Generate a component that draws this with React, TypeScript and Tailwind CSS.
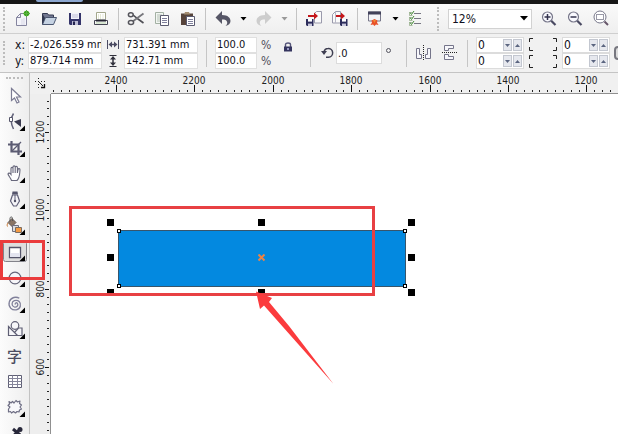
import type { ReactNode } from "react";

const FONT = "font-['DejaVu_Sans_Condensed','DejaVu_Sans','Liberation_Sans',sans-serif]";
const INK = "#4a4a62";

function Glyph({ w = 20, h = 20, children }: { w?: number; h?: number; children: ReactNode }) {
  return (
    <svg width={w} height={h} viewBox={`0 0 ${w} ${h}`} fill="none" aria-hidden="true" className="shrink-0">
      {children}
    </svg>
  );
}

function BarButton({ label, narrow, children }: { label: string; narrow?: boolean; children: ReactNode }) {
  return (
    <button
      type="button"
      aria-label={label}
      className={
        narrow
          ? "flex h-6 w-[15px] shrink-0 items-center justify-center"
          : "flex h-6 w-[26px] shrink-0 items-center justify-center"
      }
    >
      {children}
    </button>
  );
}

function Caret({ color = "#000" }: { color?: string }) {
  return (
    <Glyph w={7} h={4}>
      <path d="M0.5 0h6L3.5 3.5z" fill={color} />
    </Glyph>
  );
}

function Grip() {
  return <span className="mr-px h-6 w-0 shrink-0 border-l-2 border-dotted border-[#bcbcbc]" />;
}

function Divider() {
  return <span className="mx-1 h-[22px] w-px shrink-0 bg-[#c4c4c4]" />;
}

function Disk({ x, y }: { x: number; y: number }) {
  return (
    <g transform={`translate(${x} ${y})`}>
      <path d="M0 0h7.5v7H1L0 6z" fill="#2d2d5c" />
      <path d="M2 0h4v2.6H2z" fill="#fff" />
      <path d="M2 4.6h4V7H2z" fill="#c8c8dc" />
    </g>
  );
}

function Magnifier({ children }: { children: ReactNode }) {
  return (
    <Glyph>
      <path d="m12 11.500 4.500 4.500" stroke="#4a4a62" strokeWidth="2.200" />
      <circle cx="8.500" cy="8" r="5" fill="#fafaff" stroke="#77778a" strokeWidth="1.200" />
      {children}
    </Glyph>
  );
}

function StandardBar() {
  return (
    <div className="flex h-[30px] items-center overflow-hidden border-b border-[#cfcfcf] bg-gradient-to-b from-[#fafafa] to-[#efefef] pl-[3px]">
      <Grip />
      <span className="w-1 shrink-0" />
      <BarButton label="New">
        <Glyph>
          <path d="M3.500 8.500 7.500 4.500h6v12h-10z" fill="#f4f4fa" stroke="#85859f" />
          <path d="M3.500 8.500h4v-4" stroke="#85859f" />
          <path d="M9 10v6M11 9v7" stroke="#d9d9e7" />
          <circle cx="13.500" cy="4.500" r="2.800" fill="#3aa51c" />
          <path d="M13.500 1v7M10 4.500h7" stroke="#5cae43" />
        </Glyph>
      </BarButton>
      <BarButton label="Open">
        <Glyph>
          <path d="M3.500 15.500v-11h5l1 1.500h5v3" fill="#737992" stroke="#343a52" />
          <path d="M3.500 15.500 6.500 8.500h11l-3 7z" fill="#c5d2e2" stroke="#4a5670" />
          <path d="M3.500 5v10l2.500-6z" fill="#30364d" />
        </Glyph>
      </BarButton>
      <BarButton label="Save">
        <Glyph>
          <path d="M4 4h12v12H5l-1-1z" fill="#34346a" />
          <path d="M6 4h8v6H6z" fill="#f2f2fa" />
          <path d="M7 6h6M7 8h6" stroke="#c2c2d8" />
          <path d="M7 12h6v4H7z" fill="#bcbcd4" />
          <path d="M8 12.500h2V16H8z" fill="#24244f" />
        </Glyph>
      </BarButton>
      <BarButton label="Print">
        <Glyph>
          <path d="M5.500 10V3.500h9V10" fill="#fff" stroke="#a3a78c" />
          <path d="M7.500 5v6M9.500 5v6M12 5v6" stroke="#e5e9d5" />
          <path d="M3.500 11.500h13v4h-13z" fill="#f6f6f6" stroke="#454553" />
          <path d="M5 11.500h10" stroke="#252532" strokeWidth="2" />
          <path d="M5 14h10" stroke="#b9d6ac" />
        </Glyph>
      </BarButton>
      <Divider />
      <BarButton label="Cut">
        <Glyph>
          <path d="M4 3.500 12 10l5.500 4" stroke="#4f4f55" strokeWidth="1.600" />
          <path d="M17.500 4.500 10 10 6 13" stroke="#77777c" strokeWidth="1.800" />
          <ellipse cx="4.800" cy="5.800" rx="2.400" ry="2" fill="#f4f4f4" stroke="#55555c" strokeWidth="1.500" />
          <ellipse cx="5" cy="13.500" rx="2.600" ry="2" fill="#f4f4f4" stroke="#55555c" strokeWidth="1.500" />
        </Glyph>
      </BarButton>
      <BarButton label="Copy">
        <Glyph>
          <path d="M3.500 3.500h8v11h-8z" fill="#f2f6f2" stroke="#a3b0a3" />
          <path d="M5 6h5M5 8h5M5 10h5M5 12h5" stroke="#b4c0b4" />
          <path d="M8.500 6.500h8v10h-8z" fill="#fff" stroke="#5b5b70" />
          <path d="M10 9.500h5M10 11.500h5M10 13.500h5" stroke="#80809c" />
        </Glyph>
      </BarButton>
      <BarButton label="Paste">
        <Glyph>
          <path d="M3 4.500h12V16H3z" fill="#57443b" />
          <path d="M6 5.500 7 3h4l1 2.500z" fill="#a48d71" />
          <path d="M8.500 7.500h8v9h-8z" fill="#fff" stroke="#5b5b70" />
          <path d="M10 10.500h5M10 12.500h5M10 14.500h5" stroke="#80809c" />
        </Glyph>
      </BarButton>
      <Divider />
      <BarButton label="Undo">
        <Glyph>
          <path d="M2.500 8.500 9 2v4c6 0 8.500 3 8.500 6 0 2.500-2 4.500-5 5 1.500-1.500 2-2.500 1.600-4C13.600 11 12 10.500 9 10.500V15z" fill="#565666" />
        </Glyph>
      </BarButton>
      <BarButton label="Undo history" narrow>
        <Caret />
      </BarButton>
      <BarButton label="Redo">
        <Glyph>
          <path d="M17.500 8.500 11 2v4C5 6 2.500 9 2.500 12c0 2.500 2 4.500 5 5-1.500-1.500-2-2.500-1.600-4 .5-2 2.100-2.500 5.100-2.500V15z" fill="#cdcdcd" />
        </Glyph>
      </BarButton>
      <BarButton label="Redo history" narrow>
        <Caret color="#9a9a9a" />
      </BarButton>
      <Divider />
      <BarButton label="Import">
        <Glyph>
          <path d="M10.500 14V4.500l2-2h5V14z" fill="#fafafa" stroke="#9a9aac" />
          <Disk x={2} y={10} />
          <path d="M4 6h6V3.500L14 7l-4 3.500V8H4z" fill="#c4171b" />
        </Glyph>
      </BarButton>
      <BarButton label="Export">
        <Glyph>
          <path d="M2.500 14V5.500l3-3h5V14z" fill="#fafafa" stroke="#9a9aac" />
          <path d="M5.500 3v11" stroke="#b8b8c6" />
          <Disk x={10} y={10} />
          <path d="M6 6h5V3.500L15 7l-4 3.500V8H6z" fill="#c4171b" />
        </Glyph>
      </BarButton>
      <Divider />
      <BarButton label="Application launcher">
        <Glyph>
          <path d="M3.500 3h12v9h-12z" fill="#f3f3f7" stroke="#777789" />
          <path d="M3 2.500h13v3H3z" fill="#41415a" />
          <path d="M6.500 11.500 9.500 10l3 1.500-.5 2 1.500 2.500-2.500-.5-1.500 1.500L8 15.500l-2.500.5L7 13.500z" fill="#e85028" />
          <path d="M8 11h3l-1.500 3z" fill="#ef8b32" />
        </Glyph>
      </BarButton>
      <BarButton label="Launcher list" narrow>
        <Caret />
      </BarButton>
      <BarButton label="Options">
        <Glyph>
          <path d="M8 4.500h7M8 9.500h7M8 14.500h7" stroke="#777783" />
          <path d="M6.500 3.500H3.500v3h3M6.500 8.500H3.500v3h3M6.500 13.500H3.500v3h3" stroke="#8aa37c" strokeWidth=".7" />
          <path d="m4 3.500 1.500 2L8 2M4 8.500l1.500 2L8 7M4 13.500l1.500 2L8 12" stroke="#438a35" />
        </Glyph>
      </BarButton>
      <span className="w-2 shrink-0" />
      <Grip />
      <span className="w-2 shrink-0" />
      <div className="relative h-5 w-[84px] shrink-0">
        <select
          aria-label="Zoom level"
          defaultValue="12%"
          className="block h-5 w-full appearance-none border border-[#d2d2d2] bg-white pl-[3px] text-xs text-[#101020]"
        >
          <option>12%</option>
          <option>50%</option>
          <option>100%</option>
        </select>
        <span className="pointer-events-none absolute inset-y-0 right-1 flex items-center">
          <Glyph w={8} h={5}>
            <path d="M0 0h8L4 4.500z" fill="#000" />
          </Glyph>
        </span>
      </div>
      <span className="w-1 shrink-0" />
      <BarButton label="Zoom in">
        <Magnifier>
          <path d="M5.500 8h6M8.500 5v6" stroke="#33334e" strokeWidth="1.500" />
        </Magnifier>
      </BarButton>
      <BarButton label="Zoom out">
        <Magnifier>
          <path d="M5.500 8h6" stroke="#33334e" strokeWidth="1.500" />
        </Magnifier>
      </BarButton>
      <BarButton label="Zoom to selection">
        <Glyph>
          <circle cx="9" cy="8" r="6" fill="#fff" stroke="#77778a" />
          <path d="M5.500 5.500h7v5h-7z" stroke="#33334e" strokeDasharray="1 1" />
          <path d="m13.500 12.500 3.500 3.500" stroke="#66566a" strokeWidth="2" />
        </Glyph>
      </BarButton>
    </div>
  );
}

function Field({ id, value, width }: { id: string; value: string; width: string }) {
  return (
    <input
      id={id}
      aria-label={id}
      defaultValue={value}
      className={`h-4 border border-[#e0e0e0] bg-white pl-px text-[11px] text-[#101020] ${width}`}
    />
  );
}

function Spinner({ id }: { id: string }) {
  return (
    <div className="flex h-4 w-12 items-center gap-px border border-[#dcdcdc] bg-white pr-px">
      <input id={id} aria-label={id} defaultValue="0" className="h-3 w-0 flex-1 pl-px text-xs text-[#101020]" />
      <button type="button" aria-label={`Decrease ${id}`} className="flex h-3 w-[9px] items-center justify-center border border-[#c3c7d0] bg-[#e6e8ee]">
        <Glyph w={5} h={3}>
          <path d="M0 0h5L2.500 3z" fill="#5b6580" />
        </Glyph>
      </button>
      <button type="button" aria-label={`Increase ${id}`} className="flex h-3 w-[9px] items-center justify-center border border-[#c3c7d0] bg-[#e6e8ee]">
        <Glyph w={5} h={3}>
          <path d="M0 3h5L2.500 0z" fill="#5b6580" />
        </Glyph>
      </button>
    </div>
  );
}

function PropertyBar() {
  const rule = "h-[27px] w-px shrink-0 bg-[#c6c6c6]";
  const percent = "ml-1 w-[11px] text-xs leading-4 text-[#50505c]";
  return (
    <div className="flex h-[39px] items-center overflow-hidden border-b border-[#c4c4c4] bg-[#f1f1f1] pl-[3px] text-[11px] text-[#101020]">
      <Grip />
      <div className="ml-[9px] flex shrink-0 flex-col">
        <div className="flex items-center">
          <label htmlFor="x position" className="w-[13px] text-xs leading-4">x:</label>
          <Field id="x position" value="-2,026.559 mm" width="w-[74px]" />
          <label htmlFor="object width" aria-label="Width" className="flex w-[22px] justify-center">
            <Glyph w={14} h={10}>
              <path d="M1.500 0v9M12.500 0v9" stroke={INK} />
              <path d="M4 4.500h6" stroke={INK} strokeWidth="1.500" />
              <path d="M2.500 4.500 6 1.500v6zM11.500 4.500 8 1.500v6z" fill={INK} />
            </Glyph>
          </label>
          <Field id="object width" value="731.391 mm" width="w-[74px]" />
        </div>
        <div className="flex items-center">
          <label htmlFor="y position" className="w-[13px] text-xs leading-4">y:</label>
          <Field id="y position" value="879.714 mm" width="w-[74px]" />
          <label htmlFor="object height" aria-label="Height" className="flex w-[22px] justify-center">
            <Glyph w={10} h={12}>
              <path d="M1.500.500h7M1.500 11.500h7" stroke="#30303c" />
              <path d="M5 3v6" stroke="#30303c" strokeWidth="1.500" />
              <path d="M5 1 8 4.500H2zM5 11 2 7.500h6z" fill="#30303c" />
            </Glyph>
          </label>
          <Field id="object height" value="142.71 mm" width="w-[74px]" />
        </div>
      </div>
      <span className={`ml-2 ${rule}`} />
      <div className="ml-2 flex shrink-0 flex-col">
        <div className="flex items-center">
          <Field id="scale x" value="100.0" width="w-[42px]" />
          <label htmlFor="scale x" className={percent}>%</label>
        </div>
        <div className="flex items-center">
          <Field id="scale y" value="100.0" width="w-[42px]" />
          <label htmlFor="scale y" className={percent}>%</label>
        </div>
      </div>
      <button type="button" aria-label="Lock ratio" className="mb-3 ml-[11px] shrink-0">
        <Glyph w={10} h={10}>
          <path d="M2.500 5V2.500C2.500.500 7.500.500 7.500 2.500V5" stroke="#55557a" strokeWidth="1.400" />
          <path d="M1 4.500h8V9.500H1z" fill="#35355f" />
          <path d="M4 6h2v2H4z" fill="#9a9ac4" />
        </Glyph>
      </button>
      <span className={`ml-[17px] ${rule}`} />
      <label htmlFor="rotation" aria-label="Rotation" className="ml-[10px] shrink-0">
        <Glyph w={13} h={12}>
          <path d="M3 5C3.500 2.500 5 1.500 7 1.500a4.300 4.300 0 0 1 .5 8.800H5" stroke="#3f3f52" strokeWidth="1.500" />
          <path d="M0 4h6L3 8z" fill="#3f3f52" />
        </Glyph>
      </label>
      <input
        id="rotation"
        defaultValue=".0"
        className="ml-[2px] h-[22px] w-[46px] shrink-0 border border-[#dcdcdc] bg-white pl-px text-[11px]"
      />
      <span className="mb-[5px] ml-1 h-[5px] w-[5px] shrink-0 rounded-full border border-[#555560]" />
      <span className={`ml-[15px] ${rule}`} />
      <button type="button" aria-label="Mirror horizontally" className="ml-2 shrink-0">
        <Glyph w={18} h={16}>
          <path d="M1.500 3.500h3v6h2v4h-5zM15.500 3.500h-3v6h-2v4h5z" fill="#f7f7fb" stroke="#75758a" />
          <path d="M8.500 0v16" stroke="#222" strokeDasharray="1 1" />
        </Glyph>
      </button>
      <button type="button" aria-label="Mirror vertically" className="ml-2 shrink-0">
        <Glyph w={18} h={18}>
          <path d="M3.500 1.500h9v3h-5v2h-4zM3.500 15.500h9v-3h-5v-2h-4z" fill="#f7f7fb" stroke="#75758a" />
          <path d="M1 8.500h16" stroke="#222" strokeDasharray="1 1" />
        </Glyph>
      </button>
      <span className={`ml-2 ${rule}`} />
      <div className="ml-2 flex shrink-0 flex-col">
        <Spinner id="top left corner" />
        <Spinner id="bottom left corner" />
      </div>
      <span className="ml-1 shrink-0">
        <Glyph w={30} h={30}>
          <path
            d="M5 .500H1.500V4M1.500 9v3.500H5M5 17.500H1.500V21M1.500 26v3.500H5M25 .500h3.500V4M28.500 9v3.500H25M25 17.500h3.500V21M28.500 26v3.500H25"
            stroke="#222"
          />
        </Glyph>
      </span>
      <div className="ml-1 flex shrink-0 flex-col">
        <Spinner id="top right corner" />
        <Spinner id="bottom right corner" />
      </div>
      <button type="button" aria-label="Edit corners together" className="ml-1 h-[14px] w-4 shrink-0 rounded-sm border-2 border-[#77777f] bg-[#dcdcdc]" />
    </div>
  );
}

const tools: { name: string; flyout?: boolean; art: ReactNode }[] = [
  {
    name: "Pick",
    art: <path d="M9.500 5.500v12l3-2.500 2.500 5 2-1-2.500-5h4z" fill="#fff" stroke="#7c7c94" strokeWidth="1.200" />,
  },
  {
    name: "Shape",
    flyout: true,
    art: (
      <>
        <path d="M11.500 4.500C8.500 9 8.500 14 11.500 20" stroke="#62627a" strokeWidth="1.500" />
        <path d="M7.500 8.500h3v4h-3z" fill="#fff" stroke="#55556a" />
        <path d="M12 12.500 19 10v8z" fill="#3b3b50" />
      </>
    ),
  },
  {
    name: "Crop",
    flyout: true,
    art: (
      <>
        <path d="M9.500 6v10.500H20M6 9.500h10.500V20" stroke="#5b5b72" strokeWidth="2.200" />
        <path d="M10 16 19 7" stroke="#5b5b72" strokeWidth="1.300" />
      </>
    ),
  },
  {
    name: "Pan",
    flyout: true,
    art: (
      <path
        d="M9.500 19.500C8.500 16.500 6.500 15 6 13c.5-1.500 2-1 3 .5V7.500c0-1.500 2-1.500 2 0V12 6c0-1.500 2.200-1.500 2.200 0v6-5.500c0-1.500 2.200-1.500 2.200 0V12l.6-3.500c.4-1.500 2.200-1 2 .5-.5 4 0 7.500-3 10.500z"
        fill="#fff"
        stroke="#68687c"
        strokeWidth="1.100"
      />
    ),
  },
  {
    name: "Pen",
    flyout: true,
    art: (
      <>
        <path d="M10.500 4.500h5l.5 3h-6z" fill="#55556c" />
        <path d="M10.500 8 8.500 14l3 5h3l3-5-2-6z" fill="#f4f4f8" stroke="#606078" strokeWidth="1.200" />
        <path d="M13 8v6" stroke="#606078" />
        <circle cx="13" cy="14" r="1.200" fill="#505066" />
      </>
    ),
  },
  {
    name: "Smart fill",
    flyout: true,
    art: (
      <>
        <path d="m6 9.500 4-4 4 4-4 4z" fill="#8a7565" stroke="#63564f" />
        <path d="M8 8.500V5.500c0-2 2.500-2 2.500 0V8" stroke="#555" />
        <path d="M6 10c-1 1-1 2.500-.5 3.500" stroke="#c8762f" />
        <path d="M10.500 12.500h6v6h-6z" fill="#ddd" stroke="#6e6e7e" />
        <path d="M13.500 14.500h6v5h-6z" fill="#f39a43" stroke="#7a6d63" />
      </>
    ),
  },
  {
    name: "Rectangle",
    flyout: true,
    art: (
      <>
        <path d="M7.500 8.500h11v10h-11z" fill="#fff" stroke="#55556a" strokeWidth="1.300" />
        <path d="M8 14h10v4H8z" fill="#e3e4ef" />
      </>
    ),
  },
  {
    name: "Ellipse",
    flyout: true,
    art: <circle cx="13" cy="13" r="5.800" fill="#f6f6f9" stroke="#66667a" strokeWidth="1.200" />,
  },
  {
    name: "Spiral",
    flyout: true,
    art: (
      <path
        d="M13.500 13.500c-1-1.200 1-2.500 2-1 1.200 2-1 4.200-3.200 3.500-3-1-3-5 0-6.300 4-1.500 7 2 6 5.500-1.200 4-6.500 5-9.500 2-3.500-3.700-1.500-9.500 3-10.700 2-.500 4-.200 5.500.800"
        stroke="#80809a"
        strokeWidth="1.300"
      />
    ),
  },
  {
    name: "Basic shapes",
    flyout: true,
    art: (
      <>
        <circle cx="13" cy="8.500" r="3.800" fill="#f6f6f9" stroke="#5f5f74" strokeWidth="1.200" />
        <path d="m12.500 15.500 4-4.500h3.500v7.500h-7.500z" fill="#f6f6f9" stroke="#5f5f74" strokeWidth="1.200" />
        <path d="M6.500 9.500v9h9z" fill="#f6f6f9" stroke="#5f5f74" strokeWidth="1.200" />
      </>
    ),
  },
  { name: "Text", art: null },
  {
    name: "Table",
    art: (
      <>
        <path d="M6.500 6.500h13v12h-13z" fill="#fff" stroke="#5f5f74" />
        <path d="M6.500 9.500h13M6.500 12.500h13M6.500 15.500h13M10.500 6.500v12M15.500 6.500v12" stroke="#85859a" />
      </>
    ),
  },
  {
    name: "Roughen",
    flyout: true,
    art: (
      <path
        d="M7 6.500 9 8l1.500-1.500L12 8l2-2.500L15.500 7l2.500-1-.5 2.500 2 1.500-1.500 2 1.500 2-2 1-.5 2-2-.5-1.500 1.500-2-1.500-2 1.500-1-1.500-2 .5V15L6.500 14 8 12 6 10.500 7.500 9z"
        fill="#f8f8fb"
        stroke="#6e6e84"
        strokeWidth="1.200"
        strokeLinejoin="round"
      />
    ),
  },
  {
    name: "Eyedropper",
    art: (
      <>
        <circle cx="18" cy="8.500" r="2.500" fill="#28283a" />
        <path d="m11 8 7 6" stroke="#28283a" strokeWidth="3" />
        <path d="m17 9-10 10" stroke="#28283a" strokeWidth="2.500" />
      </>
    ),
  },
];

function Toolbox() {
  return (
    <nav aria-label="Toolbox" className="relative flex w-[30px] shrink-0 flex-col border-r border-[#c2c2c2] bg-gradient-to-r from-[#fcfcfc] to-[#eeeeee]">
      <span className="mx-[6px] my-1 h-0 shrink-0 border-t-2 border-dotted border-[#bcbcbc]" />
      {tools.map((tool) => (
        <button
          key={tool.name}
          type="button"
          aria-label={tool.name}
          className="flex h-[26px] w-full shrink-0 items-center justify-center"
        >
          {tool.name === "Text" ? (
            <span className="w-full text-center font-['Noto_Sans_CJK_SC',sans-serif] text-[15px] leading-[26px] font-medium text-[#4c4c60]">
              字
            </span>
          ) : (
            <Glyph w={26} h={26}>
              {tool.name === "Rectangle" && (
                <rect x="1.500" y="2.500" width="23" height="20" rx="2" fill="#dedede" stroke="#83838a" />
              )}
              {tool.art}
              {tool.flyout && <path d="M23 16.500v5.500h-5.500z" fill="#000" />}
            </Glyph>
          )}
        </button>
      ))}
      <span className="pointer-events-none absolute top-[167px] left-0 z-10 h-10 w-[45px] border-[3px] border-[#ea3b3c]" />
    </nav>
  );
}

/* Ruler marks: the distance between two labelled divisions is 78.4 px. */
const STEP = 78.4;

function HorizontalRuler() {
  const labels = [2400, 2200, 2000, 1800, 1600, 1400, 1200];
  const minor = Array.from({ length: 200 }, (_, i) => Math.round(65 + ((i - 8) * STEP) / 10));
  return (
    <svg className="block h-5 w-full" aria-label="Horizontal ruler">
      {minor.map((x) => (
        <rect key={x} x={x} y="17" width="1" height="2" fill="#222" />
      ))}
      {labels.map((label, i) => {
        const x = Math.round(65 + i * STEP);
        return (
          <g key={label}>
            <rect x={x} y="12" width="1" height="7" fill="#111" />
            <text x={x} y="11" textAnchor="middle" fontSize="10" fill="#222">
              {label}
            </text>
          </g>
        );
      })}
    </svg>
  );
}

function VerticalRuler() {
  const labels = [1200, 1000, 800, 600];
  const minor = Array.from({ length: 200 }, (_, i) => Math.round(38 + ((i - 4) * STEP) / 10));
  return (
    <svg className="block h-full w-5" aria-label="Vertical ruler">
      {minor.map((y) => (
        <rect key={y} x="17" y={y} width="2" height="1" fill="#222" />
      ))}
      {labels.map((label, i) => {
        const y = Math.round(38 + i * STEP);
        return (
          <g key={label}>
            <rect x="15" y={y} width="4" height="1" fill="#111" />
            <text transform={`translate(14 ${y}) rotate(-90)`} textAnchor="middle" fontSize="10" fill="#222">
              {label}
            </text>
          </g>
        );
      })}
    </svg>
  );
}

function Canvas() {
  const handle = "absolute h-[7px] w-[7px] bg-black";
  const node = "absolute h-1 w-1 border border-black bg-white";
  return (
    <main className="relative h-full min-w-0 overflow-hidden bg-white">
      <div className="absolute top-[136px] left-[67px] h-[57px] w-[288px] border border-[#38556b] bg-[#0389e0]">
        <span className={`${node} -top-[2px] -left-[2px]`} />
        <span className={`${node} -top-[2px] -right-[2px]`} />
        <span className={`${node} -bottom-[2px] -left-[2px]`} />
        <span className={`${node} -right-[2px] -bottom-[2px]`} />
      </div>
      <span className={`${handle} top-[125px] left-[56px]`} />
      <span className={`${handle} top-[125px] left-[207px]`} />
      <span className={`${handle} top-[125px] left-[357px]`} />
      <span className={`${handle} top-[160px] left-[56px]`} />
      <span className={`${handle} top-[160px] left-[357px]`} />
      <span className="absolute top-[195px] left-[56px] h-1 w-[7px] bg-black" />
      <span className="absolute top-[195px] left-[207px] h-1 w-[7px] bg-black" />
      <span className={`${handle} top-[195px] left-[357px]`} />
      <span className="absolute top-[160px] left-[207px]">
        <Glyph w={8} h={8}>
          <path d="m.500.500 6 6M6.500.500l-6 6" stroke="#ee8344" strokeWidth="2" />
        </Glyph>
      </span>
      <span className="absolute top-[112px] left-[18px] h-[90px] w-[306px] border-[3px] border-[#e84043]" />
      <span className="absolute top-[197px] left-[204px]">
        <Glyph w={80} h={94}>
          <path d="M1 0.500 17 7l-3 4 20 24L78.500 93 28 36 9 14.500 5 18z" fill="#fb3b3d" />
        </Glyph>
      </span>
    </main>
  );
}

export default function App() {
  return (
    <div className={`flex h-screen w-full flex-col overflow-hidden bg-[#f0f0f0] ${FONT}`}>
      <header className="h-1 shrink-0 bg-[#171717] pl-9">
        <span className="block h-[2px] w-[47px] rounded-b-sm bg-[#8ba6d0]" />
      </header>
      <StandardBar />
      <PropertyBar />
      <div className="flex min-h-0 flex-1">
        <Toolbox />
        <div className="grid min-w-0 flex-1 grid-cols-[21px_1fr] grid-rows-[21px_1fr]">
          <div className="flex items-center justify-center bg-[#f0f0f0]">
            <Glyph w={14} h={14}>
              <path d="M4.500 1v12M1 4.500h12" stroke="#222" strokeDasharray="1 2" />
              <path d="m5 5 4 4" stroke="#222" />
              <path d="M10.500 7v3.500H7" stroke="#111" strokeWidth="1.300" />
            </Glyph>
          </div>
          <div className="min-w-0 overflow-hidden border-b border-[#909090] bg-[#f0f0f0]">
            <HorizontalRuler />
          </div>
          <div className="min-h-0 overflow-hidden border-r border-[#909090] bg-[#eeeeee]">
            <VerticalRuler />
          </div>
          <Canvas />
        </div>
      </div>
    </div>
  );
}
